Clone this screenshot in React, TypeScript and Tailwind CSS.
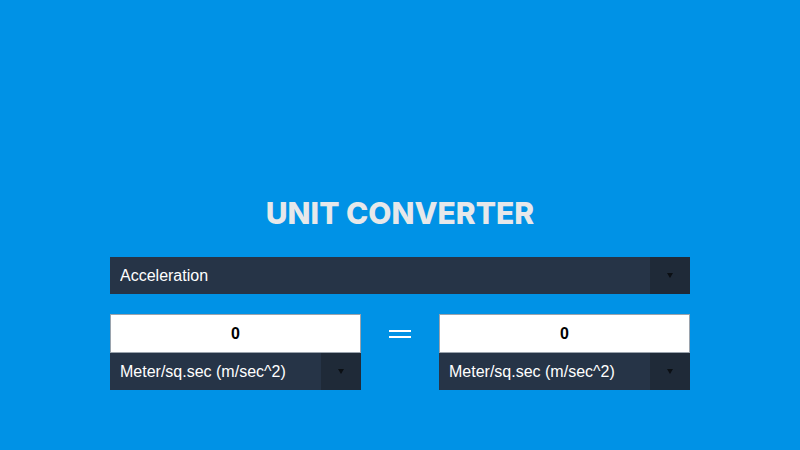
import { useState } from 'react';

// Unit converter: category select, two value boxes with unit selects.

const UNITS = ['Meter/sq.sec (m/sec^2)', 'Foot/sq.sec (ft/sec^2)', 'G (g)'];

function Select({ value, options, onChange }: { value: string; options: string[]; onChange: (v: string) => void }) {
  return (
    <div className="relative flex h-[37px] w-full items-center bg-[#263447]">
      <select
        value={value}
        onChange={(e) => onChange(e.target.value)}
        className="h-full w-full appearance-none bg-transparent pl-[10px] pr-[50px] text-[16px] text-white outline-none"
        style={{ fontFamily: '"Liberation Sans", Arial, sans-serif' }}
      >
        {options.map((o) => (
          <option key={o} value={o} className="text-black">
            {o}
          </option>
        ))}
      </select>
      <span className="pointer-events-none absolute right-0 top-0 flex h-full w-[40px] items-center justify-center bg-[#1f2a38]">
        <svg width="6" height="5" viewBox="0 0 6 5" aria-hidden>
          <path d="M0 0h6L3 5z" fill="#0b0f14" />
        </svg>
      </span>
    </div>
  );
}

function Side({ value, onValue }: { value: string; onValue: (v: string) => void }) {
  const [unit, setUnit] = useState(UNITS[0]);
  return (
    <div className="flex w-[251px] flex-col">
      <input
        value={value}
        onChange={(e) => onValue(e.target.value)}
        className="h-[39px] w-full border border-[#9aa3ad] bg-white text-center text-[16px] font-bold text-black outline-none"
        style={{ fontFamily: '"Liberation Sans", Arial, sans-serif' }}
      />
      <Select value={unit} options={UNITS} onChange={setUnit} />
    </div>
  );
}

export default function App() {
  const [kind, setKind] = useState('Acceleration');
  const [val, setVal] = useState('0');
  return (
    <div className="flex h-[450px] w-[800px] flex-col items-center bg-[#0092e6] pt-[193px]">
      <h1
        className="text-[30px] font-extrabold leading-[40px] text-[#e6e8ea]"
        style={{ fontFamily: 'Inter, "Open Sans", sans-serif' }}
      >
        UNIT CONVERTER
      </h1>
      <div className="mt-[24px] w-[580px]">
        <Select value={kind} options={['Acceleration', 'Length', 'Mass', 'Time']} onChange={setKind} />
      </div>
      <div className="mt-[20px] flex w-[580px] items-start justify-between">
        <Side value={val} onValue={setVal} />
        <div className="flex h-[39px] w-[78px] items-center justify-center">
          <svg width="22" height="8" viewBox="0 0 22 8" aria-hidden>
            <path d="M0 1h22M0 7h22" stroke="#ffffff" strokeWidth="2" />
          </svg>
        </div>
        <Side value={val} onValue={setVal} />
      </div>
    </div>
  );
}
